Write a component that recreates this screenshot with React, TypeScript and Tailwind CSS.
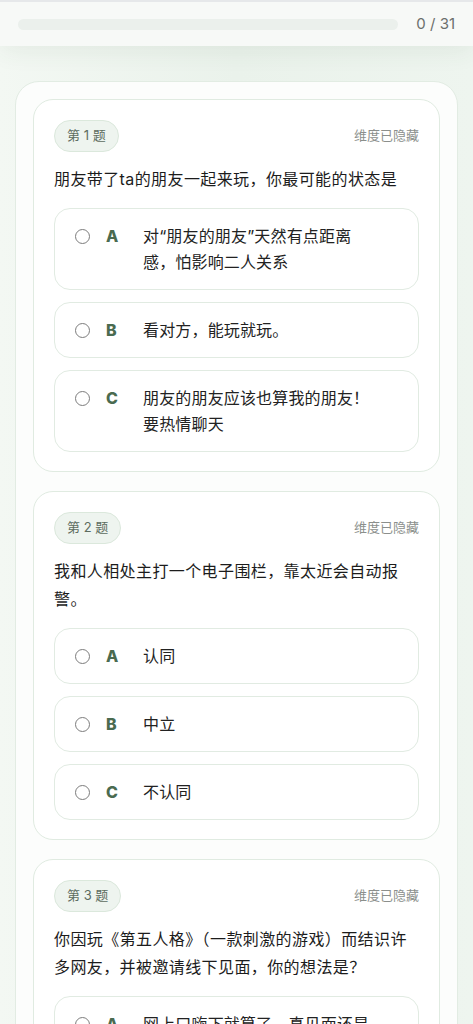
const questions = [
  {
    no: 1,
    text: '朋友带了ta的朋友一起来玩，你最可能的状态是',
    options: ['对“朋友的朋友”天然有点距离感，怕影响二人关系', '看对方，能玩就玩。', '朋友的朋友应该也算我的朋友！要热情聊天'],
  },
  {
    no: 2,
    text: '我和人相处主打一个电子围栏，靠太近会自动报警。',
    options: ['认同', '中立', '不认同'],
  },
  {
    no: 3,
    text: '你因玩《第五人格》（一款刺激的游戏）而结识许多网友，并被邀请线下见面，你的想法是？',
    options: ['网上口嗨下就算了，真见面还是算了吧', '看情况，聊得来就去', '见！认识新朋友很开心'],
  },
];

const letters = ['A', 'B', 'C'];

function Option({ letter, text }: { letter: string; text: string }) {
  return (
    <div className="flex items-start rounded-2xl border border-[#e1ebe2] bg-white py-[14px] pl-[20px] pr-[40px]">
      <span className="mt-[5.5px] h-[15px] w-[15px] shrink-0 rounded-full border-[1.5px] border-[#7c7c7c]" />
      <span className="ml-[16px] w-[37px] shrink-0 text-[16px] font-extrabold leading-[26px] text-[#4a6b50]">{letter}</span>
      <span className="max-w-[236px] text-[16px] leading-[26px] tracking-[0.01em] text-[#222]">{text}</span>
    </div>
  );
}

function QuestionCard({ no, text, options }: { no: number; text: string; options: string[] }) {
  return (
    <div className="rounded-[20px] border border-[#e0ebe1] bg-white px-5 pb-[19px] pt-5">
      <div className="flex items-center justify-between">
        <span className="flex h-[32px] items-center rounded-full border border-[#dbe8dc] bg-[#eef4ef] px-3 text-[13px] text-[#5d6c60]">
          第 {no} 题
        </span>
        <span className="text-[13px] text-[#8b8f8c]">维度已隐藏</span>
      </div>
      <p className="mt-[13px] text-[16px] leading-[28px] tracking-[0.025em] text-[#1c1c1c]">{text}</p>
      <div className="mt-[15px] flex flex-col gap-3">
        {options.map((o, i) => (
          <Option key={i} letter={letters[i]} text={o} />
        ))}
      </div>
    </div>
  );
}

export default function App() {
  return (
    <div
      className="min-h-screen bg-gradient-to-r from-[#f3f8f3] via-[#eaf2eb] to-[#eef5ef]"
      style={{ fontFamily: 'Inter, "Noto Sans CJK SC", sans-serif' }}
    >
      <header className="relative z-10 flex h-[46px] items-center gap-[18px] border-t-2 border-[#e6e8ea] bg-[#f7f9f7] px-[18px] shadow-[0_6px_24px_rgba(60,90,60,0.07)]">
        <div className="h-[11px] flex-1 rounded-full bg-[#ebf0ec]" />
        <span className="text-[15px] text-[#6b6f6c]">0 / 31</span>
      </header>
      <main className="px-[15px] pt-[35px]">
        <div className="flex flex-col gap-[19px] rounded-[24px] border border-[#e2ece3] bg-[#fcfdfc] p-[17px]">
          {questions.map((q) => (
            <QuestionCard key={q.no} {...q} />
          ))}
        </div>
      </main>
    </div>
  );
}
